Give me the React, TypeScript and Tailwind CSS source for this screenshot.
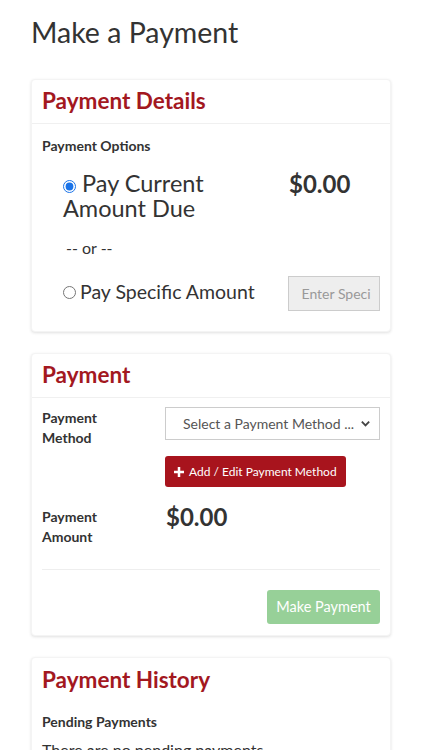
import React from "react";

function Card({ title, border = true, children }: { title: string; border?: boolean; children: React.ReactNode }) {
  return (
    <div className="bg-white rounded-[4px] shadow-[0_1px_3px_rgba(0,0,0,0.12)] border border-[#f4f4f4]">
      <div className={"px-[10px] h-[44px] flex items-center " + (border ? "border-b border-[#f0f0f0]" : "")}>
        <h2 className="text-[22.5px] font-bold text-[#a3181f] leading-none">{title}</h2>
      </div>
      {children}
    </div>
  );
}

export default function App() {
  return (
    <div className="min-h-[750px] bg-white text-[#333] px-[31px] pb-10" style={{ fontFamily: '"Lato", "Open Sans", sans-serif' }}>
      <h1 className="text-[28.5px] font-normal text-[#333] pt-[12px] leading-[40px]">Make a Payment</h1>
      <div className="mt-[27px] flex flex-col gap-[21px]">
        <Card title="Payment Details">
          <div className="px-[10px] pt-[13px] pb-[20px]">
            <div className="text-[14px] font-bold leading-[18px]">Payment Options</div>
            <div className="flex mt-[16px]">
              <div className="w-[247px] pl-[21px]">
                <div className="text-[23.5px] leading-[25px]">
                  <input type="radio" defaultChecked className="w-[13px] h-[13px] mr-[6px] align-middle accent-[#1a73e8]" />
                  Pay Current Amount Due
                </div>
              </div>
              <div className="text-[24px] font-bold leading-[25px]">$0.00</div>
            </div>
            <div className="pl-[24px] mt-[16px] text-[16px] leading-[22px]">-- or --</div>
            <div className="flex items-start mt-[17px]">
              <div className="w-[247px] pl-[21px] pt-[4px] flex items-center text-[19.5px] leading-[24px]">
                <input type="radio" className="w-[13px] h-[13px] mr-[4px]" />
                Pay Specific Amount
              </div>
              <div className="w-[93px] h-[35px] bg-[#eeeeee] border border-[#cccccc] flex items-center pl-[13px] text-[14px] text-[#999] overflow-hidden whitespace-nowrap">
                Enter Speci
              </div>
            </div>
          </div>
        </Card>
        <Card title="Payment">
          <div className="px-[10px] pt-[9px] pb-[11px]">
            <div className="flex">
              <div className="w-[123px] text-[14px] font-bold leading-[20px] pt-[1px]">Payment<br />Method</div>
              <div className="flex-1 flex flex-col items-start">
                <div className="w-full h-[33px] border border-[#cccccc] flex items-center justify-between pl-[17px] pr-[8px] text-[14px] text-[#555] whitespace-nowrap">
                  <span>Select a Payment Method ...</span>
                  <svg width="11" height="11" viewBox="0 0 12 12" fill="none" stroke="#444" strokeWidth="2"><path d="M2 4l4 4 4-4" /></svg>
                </div>
                <button className="mt-[16px] h-[31px] px-[9px] bg-[#a8141d] text-white text-[12px] rounded-[3px] flex items-center gap-[5px] whitespace-nowrap">
                  <svg width="10" height="10" viewBox="0 0 12 12"><path d="M4.5 0h3v4.5H12v3H7.5V12h-3V7.5H0v-3h4.5z" fill="white" /></svg>
                  Add / Edit Payment Method
                </button>
              </div>
            </div>
            <div className="flex mt-[20px]">
              <div className="w-[123px] text-[14px] font-bold leading-[20px]">Payment<br />Amount</div>
              <div className="text-[24px] font-bold leading-[20px] pl-[1px]">$0.00</div>
            </div>
            <div className="mt-[22px] border-t border-[#eeeeee]"></div>
            <div className="flex justify-end mt-[20px]">
              <button className="h-[34px] w-[113px] bg-[#97d098] text-white text-[14.5px] rounded-[3px]">Make Payment</button>
            </div>
          </div>
        </Card>
        <Card title="Payment History" border={false}>
          <div className="px-[10px] pt-[10px] pb-[20px]">
            <div className="text-[14px] font-bold leading-[20px]">Pending Payments</div>
            <div className="mt-[7px] text-[16px] leading-[22px]">There are no pending payments.</div>
          </div>
        </Card>
      </div>
    </div>
  );
}
